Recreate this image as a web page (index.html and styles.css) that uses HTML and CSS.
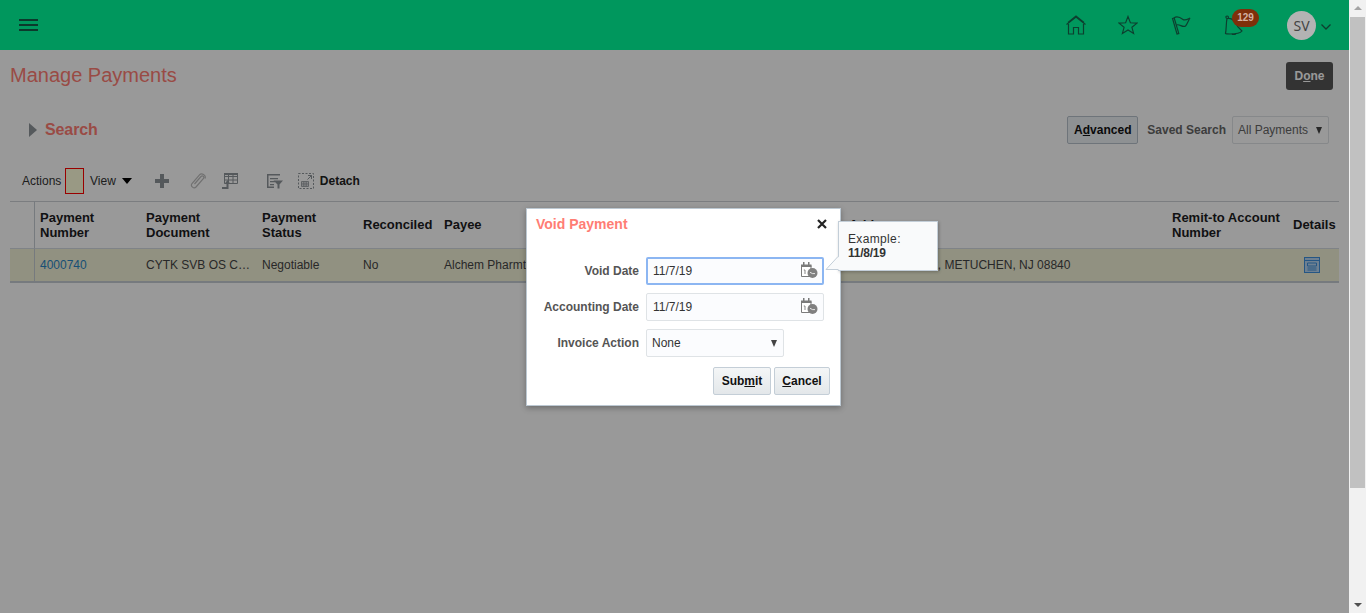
FILE: index.html
```html
<!DOCTYPE html>
<html lang="en">
<head>
<meta charset="utf-8">
<title>Manage Payments</title>
<link rel="stylesheet" href="styles.css">
</head>
<body>
<div class="shell">
  <div class="page">
    <header class="topbar">
      <button class="burger" aria-label="Menu"><span></span><span></span><span></span></button>
      <nav class="topnav">
        <svg class="topicon homeicon" viewBox="0 0 20 20"><path d="M0.5 9.5 10 2 19.5 9.5M2 7.5 10 1 18 7.5"/><path d="M2.5 9V19H7.5V12.5H12.5V19H17.5V9"/></svg>
        <svg class="topicon" viewBox="0 0 21 20"><path d="M10.5 1 13 7.6 20 8 14.6 12.4 16.4 19 10.5 15.3 4.6 19 6.4 12.4 1 8 8 7.6Z"/></svg>
        <svg class="topicon" viewBox="0 0 20 20"><path d="M1.500 3.500 3.200 3 7.800 18.500 6 19Z"/><path d="M3 3C6 0.500 10 3 12 4.500 14 6 17 4 19 3 17.500 5 16.500 9 14.500 11 11.500 13 8.500 8.500 5.500 10"/></svg>
        <div class="bell">
          <svg class="topicon" viewBox="0 0 20 20"><path d="M3 3.500C1.500 3 1.500 1 3 1 4.500 1 5 2.500 4 3.500 7 3 11 6 14 12L18 16C16 18.500 10 19 6 19 4 19 2 19 1.500 18.500 2.500 14 2 8 3 3.500Z"/><path d="M8 19C9 20 11 20 12 18.500"/></svg>
          <span class="badge">129</span>
        </div>
        <div class="user">
          <span class="avatar">SV</span>
          <svg class="chev" viewBox="0 0 10 6"><path d="M0.500 0.500 5 5 9.500 0.500"/></svg>
        </div>
      </nav>
    </header>

    <main class="main">
      <div class="titlerow">
        <h1 class="title">Manage Payments</h1>
        <button class="done">D<u>o</u>ne</button>
      </div>

      <div class="searchrow">
        <div class="searchhead"><span class="disclose"></span><span class="searchlabel">Search</span></div>
        <div class="searchtools">
          <button class="advanced">A<u>d</u>vanced</button>
          <span class="savedlabel">Saved Search</span>
          <div class="savedselect"><span>All Payments</span><span class="arrow"></span></div>
        </div>
      </div>

      <div class="toolbar">
        <span class="tool-actions">Actions</span>
        <span class="redbox"></span>
        <span class="tool-view">View</span>
        <span class="caret"></span>
        <svg class="ticon plus" viewBox="0 0 16 16"><path d="M6 1H10V6H15V10H10V15H6V10H1V6H6Z"/></svg>
        <svg class="ticon clip" viewBox="0 0 16 16"><path d="M4.500 11 11 3.500C12.500 2 14.500 3.500 13.500 5.500L6 14C4 16 0 13.500 2 10.500L9.500 1.800C11.500 -0.500 16.500 2 15 5.500"/></svg>
        <svg class="ticon grid" viewBox="0 0 16 16"><path class="gridlines" d="M2.500 0.500H15.500V10.500H2.500ZM2.500 3.500H15.500M2.500 7H15.500M6.500 0.500V10.500M11 0.500V10.500"/><path class="gridhead" d="M2 0H16V2H2Z"/><path class="gridstem" d="M0 15H5.500V10"/><path class="gridarrow" d="M2.500 11 5.500 7 8.500 11Z"/></svg>
        <svg class="ticon filter" viewBox="0 0 16 16"><path d="M0 1H13V2.500H0ZM0 1H1.500V15H0ZM0 13.500H7V15H0ZM3 5H11V6.200H3ZM3 8H8V9.200H3ZM3 11H7V12.200H3Z"/><path d="M6.500 7.500H16L12.500 11.500V15.500H10.500V11.500Z"/></svg>
        <svg class="ticon detach" viewBox="0 0 16 16"><rect class="dash" x="0.500" y="0.500" width="15" height="15"/><path class="detarrow" d="M10 2.500H13.500V6M13.500 2.500 9.500 6.500"/><path class="detgrid" d="M3.500 8.500H10.500V13.500H3.500ZM3.500 10.200H10.500M3.500 11.900H10.500M5.800 8.500V13.500M8.200 8.500V13.500"/></svg>
        <span class="tool-detach">Detach</span>
      </div>

      <table class="grid-table">
        <colgroup>
          <col class="c-gutter"><col class="c-num"><col class="c-doc"><col class="c-status"><col class="c-rec"><col class="c-payee"><col class="c-addr"><col class="c-remit"><col class="c-det">
        </colgroup>
        <thead>
          <tr>
            <th class="gutter"></th>
            <th class="first">Payment<br>Number</th>
            <th>Payment<br>Document</th>
            <th>Payment<br>Status</th>
            <th>Reconciled</th>
            <th>Payee</th>
            <th>Address</th>
            <th>Remit-to Account<br>Number</th>
            <th>Details</th>
          </tr>
        </thead>
        <tbody>
          <tr>
            <td class="gutter"></td>
            <td class="first link">4000740</td>
            <td>CYTK SVB OS C…</td>
            <td>Negotiable</td>
            <td>No</td>
            <td>Alchem Pharmtech</td>
            <td>100 Grant Street, METUCHEN, NJ 08840</td>
            <td></td>
            <td class="detcell">
              <svg class="detailicon" viewBox="0 0 16 16"><rect x="0.500" y="0.500" width="15" height="15" class="d-frame"/><path class="d-lines" d="M1 3.500H15M3.500 6H12.500V9H3.500ZM3.500 11H12.500M3.500 13H12.500"/></svg>
            </td>
          </tr>
        </tbody>
      </table>

      <div class="scrim"></div>

      <section class="dialog">
        <div class="dlghead">
          <h2 class="dlgtitle">Void Payment</h2>
          <svg class="close" viewBox="0 0 10 10"><path d="M1 1 9 9M9 1 1 9"/></svg>
        </div>
        <div class="form">
          <label class="flabel">Void Date</label>
          <div class="finput focused"><span>11/7/19</span>
            <svg class="cal" viewBox="0 0 18 18"><path class="cal-line" d="M1.500 3.500H11V14.500H1.500Z"/><path class="cal-top" d="M1 2.500H11.500V5H1ZM3 0H4.500V3H3ZM8 0H9.500V3H8Z"/><path class="cal-one" d="M3.800 8H5V12"/><circle class="cal-clock" cx="12.500" cy="11" r="5"/><path class="cal-hand" d="M10 10.300 12.500 11.600H15"/></svg>
          </div>
          <label class="flabel">Accounting Date</label>
          <div class="finput"><span>11/7/19</span>
            <svg class="cal" viewBox="0 0 18 18"><path class="cal-line" d="M1.500 3.500H11V14.500H1.500Z"/><path class="cal-top" d="M1 2.500H11.500V5H1ZM3 0H4.500V3H3ZM8 0H9.500V3H8Z"/><path class="cal-one" d="M3.800 8H5V12"/><circle class="cal-clock" cx="12.500" cy="11" r="5"/><path class="cal-hand" d="M10 10.300 12.500 11.600H15"/></svg>
          </div>
          <label class="flabel">Invoice Action</label>
          <div class="finput fselect"><span>None</span><span class="arrow dark"></span></div>
        </div>
        <div class="dlgactions">
          <button class="dlgbtn submit">Sub<u>m</u>it</button>
          <button class="dlgbtn cancel"><u>C</u>ancel</button>
        </div>
      </section>

      <aside class="callout">
        <svg class="tail" viewBox="0 0 14 15"><path class="tail-fill" d="M14 0.500 1 13.500H14Z"/><path class="tail-line" d="M13 0.500 1 13.500H13"/></svg>
        <div class="exlabel">Example:</div>
        <div class="example">11/8/19</div>
      </aside>
    </main>
  </div>

  <div class="scrollbar">
    <span class="sb-up"></span>
    <span class="sb-thumb"></span>
    <span class="sb-down"></span>
  </div>
</div>
</body>
</html>
```

FILE: styles.css
```css
* { box-sizing: border-box; }
html, body { margin: 0; padding: 0; height: 100%; overflow: hidden; }
body { font-family: "Liberation Sans", Arial, sans-serif; font-size: 12px; color: #333; background: #fff; }
button { font-family: inherit; cursor: default; }

.shell { display: flex; width: 1366px; height: 613px; }
.page { width: 1349px; display: flex; flex-direction: column; }

/* Scrollbar */
.scrollbar { width: 17px; background: #f1f1f1; display: flex; flex-direction: column; align-items: center; position: relative; }
.sb-up { margin-top: 6px; width: 0; height: 0; border-left: 4px solid transparent; border-right: 4px solid transparent; border-bottom: 4px solid #a3a3a3; }
.sb-thumb { margin-top: 7px; width: 15px; height: 471px; background: #c1c1c1; }
.sb-down { margin-top: auto; margin-bottom: 6px; width: 0; height: 0; border-left: 4px solid transparent; border-right: 4px solid transparent; border-top: 4px solid #505050; }

/* Top bar */
.topbar { height: 50px; background: #00975d; display: flex; align-items: center; justify-content: space-between; padding: 0 18px 0 19px; }
.burger { border: 0; background: none; padding: 0; width: 19px; display: flex; flex-direction: column; gap: 3px; }
.burger span { display: block; height: 2px; background: #0c3a2c; }
.topnav { display: flex; align-items: center; }
.topicon { width: 20px; height: 20px; fill: none; stroke: #0d3f2f; stroke-width: 1.2; margin-right: 33px; display: block; }
.homeicon { margin-right: 32px; }
.bell { position: relative; }
.bell .topicon { margin-right: 43px; }
.badge { position: absolute; left: 8px; top: -6px; width: 27px; height: 18px; border-radius: 9px; background: #7f2f0a; color: #d3b1a3; font-size: 10px; font-weight: bold; line-height: 18px; text-align: center; }
.user { display: flex; align-items: center; gap: 5px; }
.avatar { width: 29px; height: 29px; border-radius: 50%; background: #b3b3b3; color: #444; font-family: "Noto Sans", sans-serif; font-size: 14px; line-height: 29px; text-align: center; }
.chev { width: 10px; height: 6px; fill: none; stroke: #0d3f2f; stroke-width: 1.3; margin-top: 3px; }

/* Main */
.main { position: relative; flex: 1; background: #fff; overflow: hidden; }
.scrim { position: absolute; inset: 0; background: rgba(0, 0, 0, 0.4); }

.titlerow { display: flex; justify-content: space-between; align-items: flex-start; padding: 12px 16px 0 10px; }
.title { margin: 0; font-size: 20px; line-height: 26px; font-weight: normal; color: #ff7d74; }
.done { width: 47px; height: 28px; background: #555; border: 0; border-radius: 3px; color: #fff; font-size: 12px; font-weight: bold; padding: 0; }

.searchrow { display: flex; justify-content: space-between; align-items: center; margin-top: 26px; height: 28px; padding: 0 20px 0 29px; }
.searchhead { display: flex; align-items: center; gap: 8px; }
.disclose { width: 0; height: 0; border-top: 7px solid transparent; border-bottom: 7px solid transparent; border-left: 8px solid #8e9499; }
.searchlabel { font-size: 16px; font-weight: bold; color: #ff7d74; letter-spacing: -0.1px; }
.searchtools { display: flex; align-items: center; }
.advanced { width: 71px; height: 28px; border: 1px solid #b8c2cc; border-radius: 2px; background: #edf2f6; color: #111; font-size: 12px; font-weight: bold; padding: 0; }
.savedlabel { margin-left: 9px; font-weight: bold; color: #666; }
.savedselect { margin-left: 6px; width: 97px; height: 28px; border: 1px solid #dfe3e6; border-radius: 2px; display: flex; align-items: center; justify-content: space-between; padding: 0 5px; color: #666; }
.arrow { width: 0; height: 0; border-left: 3.5px solid transparent; border-right: 3.5px solid transparent; border-top: 7px solid #444; margin-right: 1px; }

.toolbar { display: flex; align-items: center; height: 26px; margin-top: 24px; padding-left: 22px; }
.tool-actions { width: 43px; }
.redbox { width: 19px; height: 26px; border: 1px solid #ff0000; background: #ffffdc; }
.tool-view { margin-left: 6px; }
.caret { margin-left: 6px; width: 0; height: 0; border-left: 5px solid transparent; border-right: 5px solid transparent; border-top: 6px solid #000; }
.ticon { width: 16px; height: 16px; display: block; }
.plus { margin-left: 22px; fill: #8e9499; }
.clip { margin-left: 20px; fill: none; stroke: #bdbdbd; stroke-width: 1.2; }
.grid { margin-left: 16px; }
.gridlines { fill: none; stroke: #8e9499; stroke-width: 1; }
.gridhead { fill: #8e9499; }
.gridstem { fill: none; stroke: #8e9499; stroke-width: 2; }
.gridarrow { fill: #8e9499; }
.filter { margin-left: 29px; fill: #8e9499; }
.detach { margin-left: 15px; }
.dash { fill: none; stroke: #8e9499; stroke-dasharray: 2 1.5; }
.detarrow { fill: none; stroke: #8e9499; }
.detgrid { fill: none; stroke: #8e9499; stroke-width: 0.8; }
.tool-detach { margin-left: 6px; font-weight: bold; color: #222; }

/* Table */
.grid-table { margin: 7px 0 0 10px; width: 1329px; table-layout: fixed; border-collapse: separate; border-spacing: 0; }
.c-gutter { width: 25px; }
.c-num { width: 105px; }
.c-doc { width: 116px; }
.c-status { width: 101px; }
.c-rec { width: 81px; }
.c-payee { width: 405px; }
.c-addr { width: 323px; }
.c-remit { width: 121px; }
.c-det { width: 52px; }
.grid-table th { height: 48px; padding: 0 0 1px 6px; font-size: 13px; line-height: 15px; font-weight: bold; color: #1c1c22; text-align: left; border-top: 1px solid #cdd1d5; border-bottom: 1px solid #d4dbe1; white-space: nowrap; }
.grid-table td { height: 34px; padding: 0 0 0 6px; background: #f2f2d8; color: #444; border-bottom: 2px solid #c5ccd3; white-space: nowrap; overflow: hidden; }
.grid-table .gutter { padding: 0; border-right: 1px solid #c5ccd3; }
.grid-table .first { padding-left: 5px; }
.grid-table td.link { color: #2a85c4; }
.grid-table .detcell { padding-left: 17px; }
.detailicon { width: 16px; height: 16px; display: block; }
.d-frame { fill: #b7d6f2; stroke: #3f90dc; }
.d-lines { fill: none; stroke: #3f90dc; }

/* Dialog */
.dialog { position: absolute; left: 526px; top: 158px; width: 315px; height: 198px; background: #fff; border: 1px solid #bcc8d2; box-shadow: 0 2px 6px rgba(0, 0, 0, 0.3); }
.dlghead { display: flex; justify-content: space-between; align-items: center; height: 30px; padding: 0 13px 0 9px; }
.dlgtitle { margin: 0; font-size: 14px; font-weight: bold; color: #ff7d74; }
.close { width: 10px; height: 10px; fill: none; stroke: #222; stroke-width: 2.2; }
.form { display: grid; grid-template-columns: 112px 178px; grid-auto-rows: 28px; column-gap: 7px; row-gap: 8px; align-items: center; margin-top: 18px; }
.flabel { text-align: right; font-weight: bold; color: #555; }
.finput { height: 28px; background: #fbfcfe; border: 1px solid #dfe3e6; border-radius: 2px; display: flex; align-items: center; justify-content: space-between; padding: 0 5px 0 6px; color: #333; }
.finput.focused { border: 2px solid #8cb6f2; padding: 0 4px 0 5px; }
.fselect { width: 138px; padding: 0 5px; }
.cal { width: 18px; height: 18px; }
.cal-line { fill: #fff; stroke: #7b7b7b; stroke-width: 1; }
.cal-top { fill: #7b7b7b; }
.cal-one { fill: none; stroke: #7b7b7b; stroke-width: 0.9; }
.cal-clock { fill: #808080; }
.cal-hand { fill: none; stroke: #fff; stroke-width: 0.8; }
.dlgactions { display: flex; justify-content: flex-end; gap: 3px; margin-top: 10px; padding-right: 10px; }
.dlgbtn { height: 28px; border: 1px solid #c4ced7; border-radius: 2px; background: linear-gradient(#f4f6f7, #e3e7ea); color: #111; font-size: 12px; font-weight: bold; padding: 0; }
.submit { width: 58px; }
.cancel { width: 56px; }

/* Callout */
.callout { position: absolute; left: 838px; top: 171px; width: 100px; height: 50px; background: #f9fafb; border: 1px solid #c3ced8; box-shadow: 1px 1px 3px rgba(0, 0, 0, 0.25); padding: 10px 0 0 9px; line-height: 14px; color: #333; }
.exlabel { letter-spacing: 0.35px; }
.example { font-weight: bold; letter-spacing: -0.25px; }
.tail { position: absolute; left: -14px; top: 34px; width: 14px; height: 15px; }
.tail-fill { fill: #f9fafb; }
.tail-line { fill: none; stroke: #c3ced8; }
```
